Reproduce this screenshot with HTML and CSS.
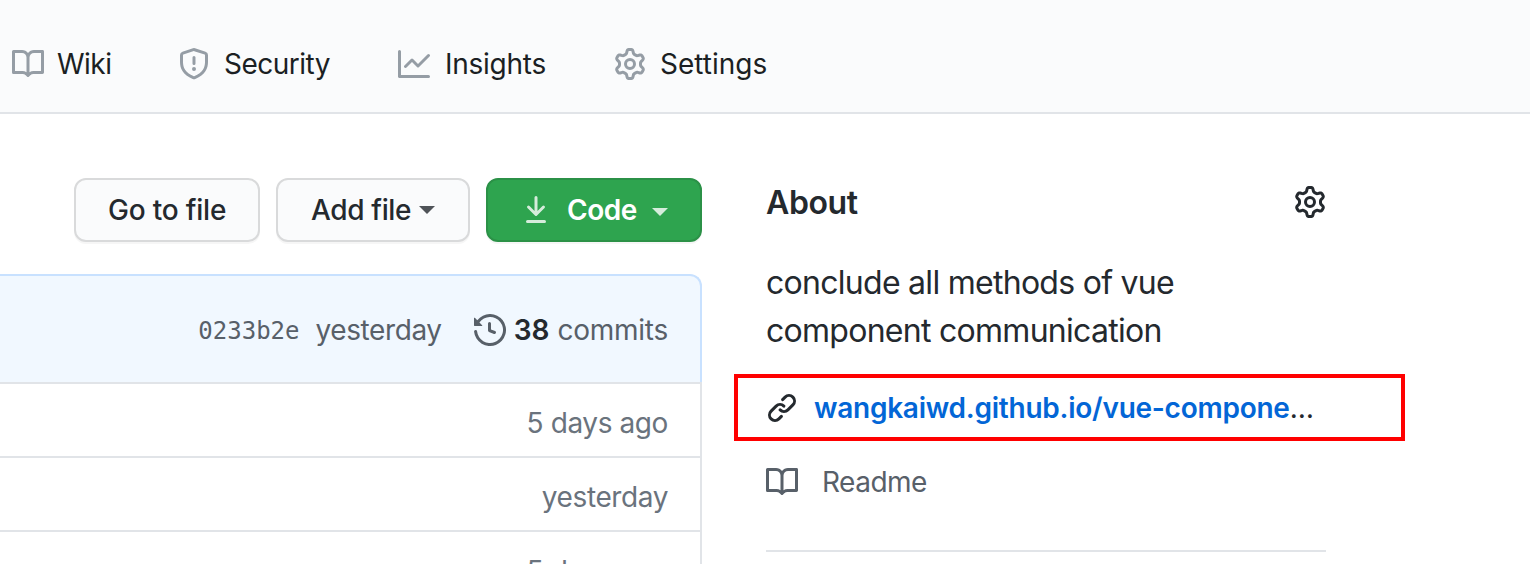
FILE: index.html
```html
<!DOCTYPE html>
<html lang="en">
<head>
<meta charset="utf-8">
<title>Repository</title>
<link rel="stylesheet" href="styles.css">
</head>
<body>
<svg class="sprite" aria-hidden="true">
  <symbol id="book" viewBox="0 0 16 16"><path fill-rule="evenodd" d="M0 1.75A.75.75 0 01.75 1h4.253c1.227 0 2.317.59 3 1.501A3.744 3.744 0 0111.006 1h4.245a.75.75 0 01.75.75v10.5a.75.75 0 01-.75.75h-4.507a2.25 2.25 0 00-1.591.659l-.622.621a.75.75 0 01-1.06 0l-.622-.621A2.25 2.25 0 005.258 13H.75a.75.75 0 01-.75-.75V1.75zm8.755 3a2.25 2.25 0 012.25-2.25H14.5v9h-3.757c-.71 0-1.4.201-1.992.572l.004-7.322zm-1.504 7.324l.004-5.073-.002-2.253A2.25 2.25 0 005.003 2.5H1.5v9h3.757a3.75 3.75 0 011.994.574z"/></symbol>
  <symbol id="shield" viewBox="0 0 16 16"><path fill-rule="evenodd" d="M7.467.133a1.75 1.75 0 011.066 0l5.25 1.68A1.75 1.75 0 0115 3.48V7c0 1.566-.32 3.182-1.303 4.682-.983 1.498-2.585 2.813-5.032 3.855a1.7 1.7 0 01-1.33 0c-2.447-1.042-4.049-2.357-5.032-3.855C1.32 10.182 1 8.566 1 7V3.48a1.75 1.75 0 011.217-1.667l5.25-1.68zm.61 1.429a.25.25 0 00-.153 0l-5.25 1.68a.25.25 0 00-.174.238V7c0 1.358.275 2.666 1.057 3.86.784 1.194 2.121 2.34 4.366 3.297a.2.2 0 00.154 0c2.245-.956 3.582-2.104 4.366-3.298C13.225 9.666 13.5 8.36 13.5 7V3.48a.25.25 0 00-.174-.237l-5.25-1.68zM9 10.5a1 1 0 11-2 0 1 1 0 012 0zm-.25-5.75a.75.75 0 10-1.5 0v3a.75.75 0 001.5 0v-3z"/></symbol>
  <symbol id="graph" viewBox="0 0 16 16"><path fill-rule="evenodd" d="M1.5 1.75a.75.75 0 00-1.5 0v12.5c0 .414.336.75.75.75h14.5a.75.75 0 000-1.5H1.5V1.75zm14.28 2.53a.75.75 0 00-1.06-1.06L10 7.94 7.53 5.47a.75.75 0 00-1.06 0L3.22 8.72a.75.75 0 001.06 1.06L7 7.06l2.47 2.47a.75.75 0 001.06 0l5.25-5.25z"/></symbol>
  <symbol id="gear" viewBox="0 0 16 16"><path fill-rule="evenodd" d="M7.429 1.525a6.593 6.593 0 011.142 0c.036.003.108.036.137.146l.289 1.105c.147.56.55.967.997 1.189.174.086.341.183.501.29.417.278.97.423 1.53.27l1.102-.303c.11-.03.175.016.195.046.219.31.41.641.573.989.014.031.022.11-.059.19l-.815.806c-.411.406-.562.957-.53 1.456a4.588 4.588 0 010 .582c-.032.499.119 1.05.53 1.456l.815.806c.08.08.073.159.059.19a6.494 6.494 0 01-.573.99c-.02.029-.086.074-.195.045l-1.103-.303c-.559-.153-1.112-.008-1.529.27-.16.107-.327.204-.5.29-.449.222-.851.628-.998 1.189l-.289 1.105c-.029.11-.101.143-.137.146a6.613 6.613 0 01-1.142 0c-.036-.003-.108-.037-.137-.146l-.289-1.105c-.147-.56-.55-.967-.997-1.189a4.502 4.502 0 01-.501-.29c-.417-.278-.97-.423-1.53-.27l-1.102.303c-.11.03-.175-.016-.195-.046a6.492 6.492 0 01-.573-.989c-.014-.031-.022-.11.059-.19l.815-.806c.411-.406.562-.957.53-1.456a4.587 4.587 0 010-.582c.032-.499-.119-1.05-.53-1.456l-.815-.806c-.08-.08-.073-.159-.059-.19a6.44 6.44 0 01.573-.99c.02-.029.086-.075.195-.045l1.103.303c.559.153 1.112.008 1.529-.27.16-.107.327-.204.5-.29.449-.222.851-.628.998-1.189l.289-1.105c.029-.11.101-.143.137-.146zM8 0c-.236 0-.47.01-.701.03-.743.065-1.29.615-1.458 1.261l-.29 1.106c-.017.066-.078.158-.211.224a5.994 5.994 0 00-.668.386c-.123.082-.233.09-.3.071L3.27 2.776c-.644-.177-1.392.02-1.82.63a7.977 7.977 0 00-.704 1.217c-.315.675-.111 1.422.363 1.891l.815.806c.05.048.098.147.088.294a6.084 6.084 0 000 .772c.01.147-.038.246-.088.294l-.815.806c-.474.469-.678 1.216-.363 1.891.2.428.436.835.704 1.218.428.609 1.176.806 1.82.63l1.103-.303c.066-.019.176-.011.299.071.213.143.436.272.668.386.133.066.194.158.212.224l.289 1.106c.169.646.715 1.196 1.458 1.26a8.094 8.094 0 001.402 0c.743-.064 1.29-.614 1.458-1.26l.29-1.106c.017-.066.078-.158.211-.224a5.98 5.98 0 00.668-.386c.123-.082.233-.09.3-.071l1.102.302c.644.177 1.392-.02 1.82-.63.268-.382.505-.789.704-1.217.315-.675.111-1.422-.364-1.891l-.814-.806c-.05-.048-.098-.147-.088-.294a6.1 6.1 0 000-.772c-.01-.147.039-.246.088-.294l.814-.806c.475-.469.679-1.216.364-1.891a7.992 7.992 0 00-.704-1.218c-.428-.609-1.176-.806-1.82-.63l-1.103.303c-.066.019-.176.011-.299-.071a5.991 5.991 0 00-.668-.386c-.133-.066-.194-.158-.212-.224L10.16 1.29C9.99.645 9.444.095 8.701.031A8.094 8.094 0 008 0zm1.5 8a1.5 1.5 0 11-3 0 1.5 1.5 0 013 0zM11 8a3 3 0 11-6 0 3 3 0 016 0z"/></symbol>
  <symbol id="download" viewBox="0 0 16 16"><path fill-rule="evenodd" d="M7.47 10.78a.75.75 0 001.06 0l3.75-3.75a.75.75 0 00-1.06-1.06L8.75 8.44V1.75a.75.75 0 00-1.5 0v6.69L4.78 5.97a.75.75 0 00-1.06 1.06l3.75 3.75zM3.75 13a.75.75 0 000 1.5h8.5a.75.75 0 000-1.5h-8.5z"/></symbol>
  <symbol id="history" viewBox="0 0 16 16"><path fill-rule="evenodd" d="M1.643 3.143L.427 1.927A.25.25 0 000 2.104V5.75c0 .138.112.25.25.25h3.646a.25.25 0 00.177-.427L2.715 4.215a6.5 6.5 0 11-1.18 4.458.75.75 0 10-1.493.154 8.001 8.001 0 101.6-5.684zM7.75 4a.75.75 0 01.75.75v2.992l2.028.812a.75.75 0 01-.557 1.392l-2.5-1A.75.75 0 017 8.25v-3.5A.75.75 0 017.75 4z"/></symbol>
  <symbol id="link" viewBox="0 0 16 16"><path fill-rule="evenodd" d="M7.775 3.275a.75.75 0 001.06 1.06l1.25-1.25a2 2 0 112.83 2.83l-2.5 2.5a2 2 0 01-2.83 0 .75.75 0 00-1.06 1.06 3.5 3.5 0 004.95 0l2.5-2.5a3.5 3.5 0 00-4.95-4.95l-1.25 1.25zm-4.69 9.64a2 2 0 010-2.83l2.5-2.5a2 2 0 012.83 0 .75.75 0 001.06-1.06 3.5 3.5 0 00-4.95 0l-2.5 2.5a3.5 3.5 0 004.95 4.95l1.25-1.25a.75.75 0 00-1.06-1.06l-1.25 1.25a2 2 0 01-2.83 0z"/></symbol>
</svg>

<nav class="tabs">
  <a class="tab tab-wiki"><svg class="icon"><use href="#book"/></svg><span>Wiki</span></a>
  <a class="tab tab-security"><svg class="icon"><use href="#shield"/></svg><span>Security</span></a>
  <a class="tab tab-insights"><svg class="icon"><use href="#graph"/></svg><span>Insights</span></a>
  <a class="tab"><svg class="icon"><use href="#gear"/></svg><span>Settings</span></a>
</nav>

<main class="page">
  <section class="files">
    <div class="actions">
      <button class="btn btn-goto">Go to file</button>
      <button class="btn btn-add">Add file<i class="caret"></i></button>
      <button class="btn btn-code"><svg class="icon"><use href="#download"/></svg>Code<i class="caret"></i></button>
    </div>
    <div class="commit-bar">
      <span class="hash">0233b2e</span>
      <span class="when">yesterday</span>
      <svg class="icon"><use href="#history"/></svg>
      <strong class="count">38</strong>
      <span class="commits">commits</span>
    </div>
    <div class="row">5 days ago</div>
    <div class="row">yesterday</div>
    <div class="row row-last">5 days ago</div>
  </section>

  <aside class="about">
    <div class="about-head">
      <h2 class="about-title">About</h2>
      <svg class="icon"><use href="#gear"/></svg>
    </div>
    <p class="description">conclude all methods of vue<br>component communication</p>
    <div class="site">
      <svg class="icon"><use href="#link"/></svg>
      <span><a class="site-link">wangkaiwd.github.io/vue-compone</a><span class="dots">…</span></span>
    </div>
    <div class="readme"><svg class="icon"><use href="#book"/></svg><span>Readme</span></div>
    <hr class="divider">
  </aside>
</main>
</body>
</html>
```

FILE: styles.css
```css
* { box-sizing: border-box; }

body {
  margin: 0;
  height: 564px;
  overflow: hidden;
  background: #fff;
  color: #24292e;
  font-family: Inter, "Liberation Sans", sans-serif;
  font-size: 28px;
  line-height: 42px;
  white-space: nowrap;
}

.sprite { display: none; }

.icon {
  flex: none;
  width: 32px;
  height: 32px;
  fill: currentColor;
}

.tabs {
  display: flex;
  height: 114px;
  padding: 43px 0 0 12px;
  background: #fafbfc;
  border-bottom: 2px solid #e1e4e8;
}

.tab {
  display: flex;
  gap: 14px;
  height: 42px;
  align-items: center;
  color: #1b1f23;
}

.tab .icon { color: #959da5; }
.tab-wiki { gap: 13px; width: 166px; letter-spacing: -.5px; }
.tab-security { width: 220px; letter-spacing: -.5px; }
.tab-insights { gap: 15px; width: 216px; letter-spacing: -.25px; }

.page { display: flex; height: 450px; overflow: hidden; }

.files {
  display: flex;
  flex-direction: column;
  width: 702px;
  height: 450px;
  padding-top: 64px;
}

.actions {
  display: flex;
  flex: none;
  justify-content: flex-end;
  gap: 16px;
  margin-bottom: 32px;
}

.btn {
  display: flex;
  align-items: center;
  justify-content: flex-start;
  height: 64px;
  padding: 0 0 0 32px;
  border: 2px solid #d9dadb;
  border-radius: 12px;
  background: #fafbfc;
  box-shadow: 0 2px 0 rgba(27, 31, 35, .04);
  color: #24292e;
  font: 500 28px/42px Inter, "Liberation Sans", sans-serif;
  letter-spacing: -.2px;
}

.btn-goto { width: 186px; }
.btn-add { width: 194px; padding-left: 33px; letter-spacing: -.35px; }
.btn-code {
  width: 216px;
  border-color: #2b9147;
  background: #2ea44f;
  color: #fff;
  font-weight: 600;
  letter-spacing: -.5px;
}

.btn-code .icon { margin-right: 15px; opacity: .8; }

.caret {
  margin-left: 8px;
  border: 8px solid transparent;
  border-top-color: currentColor;
  border-bottom: 0;
  opacity: .8;
}

.btn-code .caret { margin-left: 15px; margin-top: 4px; }

.commit-bar {
  display: flex;
  flex: none;
  align-items: center;
  justify-content: flex-end;
  height: 108px;
  padding: 2px 32px 0 0;
  border: 2px solid #c8e1ff;
  border-width: 2px 2px 0 0;
  border-top-right-radius: 12px;
  background: #f1f8ff;
  color: #586069;
}

.hash {
  margin-right: 16px;
  padding-top: 2px;
  font: 24px/42px "DejaVu Sans Mono", monospace;
}

.when { margin-right: 32px; letter-spacing: -.4px; }
.count { margin: 0 8px; font-weight: 600; color: #24292e; }
.commits { letter-spacing: -.25px; }

.row {
  display: flex;
  flex: none;
  align-items: center;
  justify-content: flex-end;
  height: 74px;
  padding: 5px 32px 0 0;
  border: 2px solid #e1e4e8;
  border-width: 2px 2px 0 0;
  color: #6a737d;
  letter-spacing: -.4px;
}

.row-last {
  align-items: flex-start;
  height: 34px;
  padding-top: 18px;
  overflow: hidden;
}

.about { width: 671px; margin-left: 32px; padding-top: 64px; }

.about-head {
  display: flex;
  align-items: center;
  justify-content: space-between;
  width: 592px;
  height: 48px;
  padding-left: 32px;
}

.about-title {
  margin: 0;
  padding-top: 2px;
  font-size: 32px;
  font-weight: 600;
  line-height: 48px;
  letter-spacing: -.4px;
}

.description {
  margin: 33px 0 0;
  padding-left: 32px;
  font-size: 32px;
  line-height: 48px;
  letter-spacing: -.72px;
}

.site {
  display: flex;
  align-items: center;
  gap: 16px;
  height: 67px;
  margin-top: 19px;
  padding-left: 28px;
  border: 4px solid #f00;
}

.site-link { color: #0366d6; font-weight: 600; letter-spacing: -.25px; }
.dots { letter-spacing: -1px; }

.readme {
  display: flex;
  align-items: center;
  gap: 24px;
  height: 42px;
  margin-top: 20px;
  padding-left: 32px;
  color: #586069;
  letter-spacing: -.5px;
}

.divider {
  width: 560px;
  height: 2px;
  margin: 47px 0 0 32px;
  border: 0;
  background: #e1e4e8;
}
```
